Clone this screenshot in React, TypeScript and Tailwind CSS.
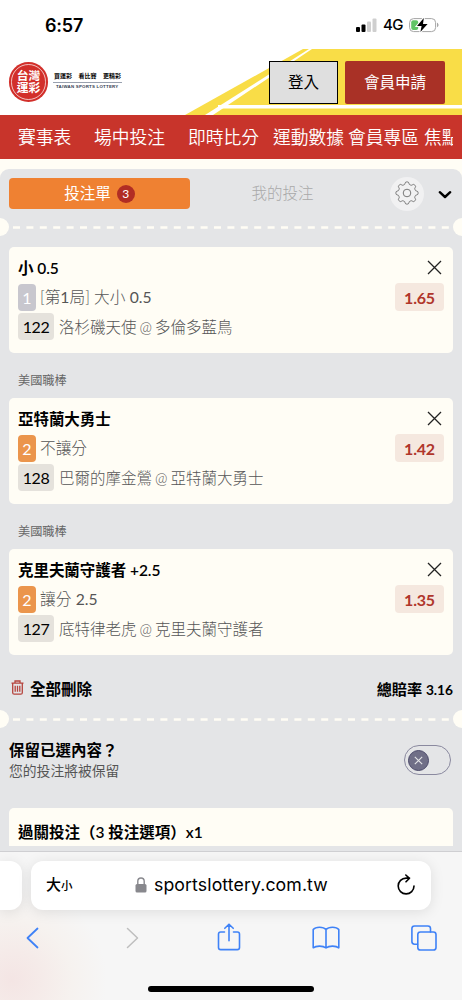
import * as React from "react"

interface Bet {
    id: number
    league?: string
    title: string
    side: number
    market: React.ReactNode
    code: string
    away: string
    home: string
    odds: string
}

const bets: Bet[] = [
    {
        id: 1,
        title: "小 0.5",
        side: 1,
        market: (
            <>
                [第<span className="font-normal">1</span>局] 大小 <span className="font-normal">0.5</span>
            </>
        ),
        code: "122",
        away: "洛杉磯天使",
        home: "多倫多藍鳥",
        odds: "1.65",
    },
    { id: 2, league: "美國職棒", title: "亞特蘭大勇士", side: 2, market: "不讓分", code: "128", away: "巴爾的摩金鶯", home: "亞特蘭大勇士", odds: "1.42" },
    {
        id: 3,
        league: "美國職棒",
        title: "克里夫蘭守護者 +2.5",
        side: 2,
        market: (
            <>
                讓分 <span className="font-normal">2.5</span>
            </>
        ),
        code: "127",
        away: "底特律老虎",
        home: "克里夫蘭守護者",
        odds: "1.35",
    },
]

// Eight rounded teeth around a circle, first one pointing up
const gearPath =
    Array.from({ length: 96 }, (_, i) => {
        const angle = (i / 96) * Math.PI * 2
        const r = 9.9 + 1.2 * Math.tanh(2.2 * Math.cos(angle * 8))
        const x = 12 + r * Math.sin(angle)
        const y = 12 - r * Math.cos(angle)
        return `${i === 0 ? "M" : "L"}${x.toFixed(2)} ${y.toFixed(2)}`
    }).join("") + "z"

function StatusBar() {
    return (
        <div className="flex h-[49px] items-start justify-between bg-white pl-[45px] pr-[23px] pt-[13px]">
            <span className="font-['Inter',sans-serif] text-[18px] font-semibold leading-[26px] tracking-[-0.2px]">6:57</span>
            <div className="flex h-6 items-center">
                <svg width="21" height="14" viewBox="0 0 21 14">
                    <rect x="0" y="9" width="4" height="5" rx="1" />
                    <rect x="5.5" y="6.5" width="4" height="7.5" rx="1" />
                    <rect x="11" y="3.5" width="4" height="10.5" rx="1" fill="#cfcfcf" />
                    <rect x="16.5" y="0.5" width="4" height="13.5" rx="1" fill="#cfcfcf" />
                </svg>
                <span className="ml-[6px] w-[21px] font-['Inter',sans-serif] text-[15px] font-medium leading-[26px] tracking-[-0.5px]">4G</span>
                <svg className="ml-[5px]" width="30" height="16" viewBox="0 0 30 16">
                    <rect x="0.6" y="1.6" width="26" height="13" rx="4" fill="white" stroke="#a5a5a5" />
                    <path d="M28 5.8v4.4c1-.4 1.5-1.2 1.5-2.2S29 6.2 28 5.8z" fill="#a5a5a5" />
                    <rect x="2.2" y="3.2" width="7" height="9.8" rx="2" fill="#61c466" />
                    <path d="M14.8 1 8 9h4.6l-1.2 6L18.6 7H14z" stroke="white" strokeWidth="2" />
                    <path d="M14.8 1 8 9h4.6l-1.2 6L18.6 7H14z" />
                </svg>
            </div>
        </div>
    )
}

function Logo() {
    return (
        <div className="flex items-center">
            <div className="relative flex h-[40px] w-[39px] items-center justify-center rounded-full bg-[#d22f2a]">
                <span className="absolute inset-[2px] rounded-full border border-white/70" />
                <div className="text-center text-[11.8px] font-bold leading-[11.6px] text-white">
                    台灣
                    <br />
                    運彩
                </div>
            </div>
            <div className="-mt-[2px] ml-[5px] w-[69px] text-black">
                <div className="flex h-[10px] justify-between px-[1px] text-[6px] font-bold leading-[8px]">
                    <span>買運彩</span>
                    <span>看比賽</span>
                    <span>更精彩</span>
                </div>
                <div className="border-t border-gray-400 pl-[3px] font-['Liberation_Sans',sans-serif] text-[4.4px] font-bold leading-[8px] tracking-[0.22px] whitespace-nowrap text-gray-700">
                    TAIWAN SPORTS LOTTERY
                </div>
            </div>
        </div>
    )
}

function Header() {
    return (
        <header className="relative h-[66px] bg-white">
            <svg className="absolute inset-0" width="462" height="66" viewBox="0 0 462 66">
                <path d="M185 66 303 0H462V66z" fill="#f9dd47" />
                <path d="M205 66 309 0h3L213 66z" fill="white" />
                <path d="M218 59.5V56H462V59.5z" fill="white" />
            </svg>
            <div className="relative flex h-full items-center justify-between pl-[9px] pr-[17px]">
                <Logo />
                <div className="flex gap-[7px]">
                    <button className="h-[43px] w-[69px] border border-black bg-[#dfdfdf] pt-[2px] text-[15.5px] text-black">登入</button>
                    <button className="h-[43px] w-[100px] rounded-[2px] bg-[#a93126] pt-[2px] text-[15.5px] text-white">會員申請</button>
                </div>
            </div>
        </header>
    )
}

function NavBar() {
    return (
        <nav className="flex h-[44px] overflow-hidden bg-[#c8342b] pl-[18px] text-[17.8px] font-[350] leading-[45px] whitespace-nowrap text-white">
            <span className="w-[76px] shrink-0">賽事表</span>
            <span className="w-[94px] shrink-0">場中投注</span>
            <span className="w-[85px] shrink-0">即時比分</span>
            <span className="w-[75px] shrink-0">運動數據</span>
            <span className="w-[76px] shrink-0">會員專區</span>
            <span className="w-[29px] shrink-0 overflow-hidden">焦點</span>
        </nav>
    )
}

function Perforation() {
    return (
        <div className="flex h-[18px] items-center justify-between">
            <span className="h-[18px] w-[9px] rounded-r-full bg-[#fffdf5]" />
            <svg width="437" height="3" className="mt-[1px]">
                <line x1="0" y1="1.5" x2="437" y2="1.5" stroke="#fffdf5" strokeWidth="2.5" strokeDasharray="7 6.4" />
            </svg>
            <span className="h-[18px] w-[9px] rounded-l-full bg-[#fffdf5]" />
        </div>
    )
}

function SlipTabs() {
    return (
        <div className="flex h-[49px] pl-[9px] pt-[9px]">
            <div className="flex h-[31px] w-[181px] items-center justify-center gap-[6px] rounded-[4px] bg-[#ef8132] text-[15.5px] text-white">
                投注單
                <span className="flex h-[18px] w-[18px] items-center justify-center rounded-full bg-[#b12d24] text-[12px]">3</span>
            </div>
            <div className="h-[31px] w-[185px] text-center text-[15.5px] font-light leading-[31px] text-[#a9a9a9]">我的投注</div>
            <div className="-mt-[1px] ml-[15px] flex h-[34px] w-[34px] items-center justify-center rounded-full bg-[#f1f1f2]">
                <svg className="-mt-[3px]" width="24" height="24" viewBox="0 0 24 24" fill="none" stroke="#777" strokeWidth="1">
                    <circle cx="12" cy="12" r="3.8" />
                    <path d={gearPath} strokeLinejoin="round" />
                </svg>
            </div>
            <svg className="ml-[14px] mt-[12px]" width="14" height="10" viewBox="0 0 14 10" fill="none" stroke="black" strokeWidth="2.4" strokeLinecap="round" strokeLinejoin="round">
                <path d="M1.8 2.2 7 7l5.2-4.8" />
            </svg>
        </div>
    )
}

function BetCard({ bet }: { bet: Bet }) {
    return (
        <>
            {bet.league && <div className="h-[45px] pl-[9px] text-[12.2px] leading-[55px] text-[#666]">{bet.league}</div>}
            <div className="h-[106px] rounded-[5px] bg-[#fffdf5] px-[9px] pt-[8px]">
                <div className="flex h-[28px] justify-between">
                    <h3 className="text-[15.5px] font-semibold leading-[26px] tracking-[-0.05px]">{bet.title}</h3>
                    <svg className="mr-[2px] mt-[5px]" width="15" height="15" viewBox="0 0 15 15" stroke="#222" strokeWidth="1.3">
                        <path d="M1 1l13 13M14 1 1 14" />
                    </svg>
                </div>
                <div className="flex h-[30px] items-start justify-between">
                    <div className="flex h-[29px] items-center">
                        <span className={`h-[27px] w-[18px] rounded-[4px] text-center text-[16px] leading-[28px] text-white ${bet.side === 1 ? "bg-[#c8c7ce]" : "bg-[#eb954c]"}`}>{bet.side}</span>
                        <span className="ml-[4px] text-[15.7px] font-light leading-[27px] text-[#555]">{bet.market}</span>
                    </div>
                    <span className="h-[28px] w-[49px] rounded-[4px] bg-[#f5e8df] text-center text-[16px] font-bold leading-[29px] tracking-[-0.2px] text-[#b0362b]">{bet.odds}</span>
                </div>
                <div className="flex h-[27px] items-center">
                    <span className="h-[27px] w-[36px] rounded-[4px] bg-[#e5e2dc] text-center text-[16px] leading-[27px] tracking-[-0.5px]">{bet.code}</span>
                    <span className="ml-[5px] flex gap-[3px] text-[15.5px] font-light leading-[26px] whitespace-nowrap text-[#555]">
                        <span>{bet.away}</span>
                        <span className="text-[15px]">@</span>
                        <span>{bet.home}</span>
                    </span>
                </div>
            </div>
        </>
    )
}

function SlipFooter() {
    return (
        <>
            <div className="flex h-[55px] items-start justify-between px-[9px] pt-[21px] font-bold">
                <div className="flex items-center text-[15.5px] leading-[26px]">
                    <svg className="ml-[2px] mr-[6px] -mt-[3px]" width="13" height="15" viewBox="0 0 13 15" fill="none" stroke="#b5433d" strokeWidth="1.3">
                        <path d="M.5 3.2h12M4 3V1h5v2M1.7 3.5v9.2q0 1.5 1.5 1.5h6.6q1.500 0 1.500-1.500V3.500M4.200 5.800v6M6.500 5.800v6M8.800 5.800v6" />
                    </svg>
                    全部刪除
                </div>
                <div className="text-[15.200px] leading-[26px]">
                    總賠率 <span className="text-[13.700px]">3.16</span>
                </div>
            </div>
            <Perforation />
            <div className="flex h-[80px] justify-between pl-[9px] pr-[11px] pt-[11px]">
                <div>
                    <div className="text-[15.5px] font-bold leading-[22px]">保留已選內容？</div>
                    <div className="text-[13.8px] leading-[20px] text-[#555]">您的投注將被保留</div>
                </div>
                <div className="mt-[6px] flex h-[30px] w-[47px] items-center rounded-full border border-[#8a899f] pl-[3px]">
                    <span className="flex h-[21px] w-[21px] items-center justify-center rounded-full border border-[#4d4b6b] bg-[#706f87]">
                        <svg width="9" height="9" viewBox="0 0 9 9" stroke="#e4e5e7" strokeWidth="1.1">
                            <path d="M.8.8l7.4 7.4M8.2.8.8 8.2" />
                        </svg>
                    </span>
                </div>
            </div>
            <div className="mx-[9px] h-[38px] rounded-t-[5px] bg-[#fffdf5] pl-[9px] pt-[11px] text-[15.5px] font-semibold leading-[26px]">
                過關投注（3 投注選項）x1
            </div>
        </>
    )
}

function SafariBar() {
    return (
        <footer className="h-[149px] overflow-hidden border-t border-[#cfcfd2] bg-[#f6f6f6] bg-[radial-gradient(circle_at_12px_128px,#f4e5e4_0px,#f5ebe9_30px,#f6f2ef_60px,transparent_95px)]">
            <div className="flex pt-[9px] font-['Inter','Noto_Sans_CJK_TC',sans-serif]">
                <div className="h-[49px] w-[22px] rounded-r-[12px] bg-white shadow-[0_2px_14px_rgba(0,0,0,0.1)]" />
                <div className="ml-[9px] flex h-[49px] w-[400px] items-center rounded-[12px] bg-white pl-[15px] pr-[15px] shadow-[0_2px_14px_rgba(0,0,0,0.1)]">
                    <span className="w-[89px] text-[15px] font-medium">
                        大<span className="text-[11.5px]">小</span>
                    </span>
                    <svg width="12" height="16" viewBox="0 0 12 16" className="-mt-[2px] shrink-0">
                        <rect x="0.5" y="7" width="11" height="8.5" rx="1.5" fill="#88888d" />
                        <path d="M2.8 8V4.3c0-4.4 6.4-4.4 6.4 0V8" fill="none" stroke="#88888d" strokeWidth="1.4" />
                    </svg>
                    <span className="ml-[7px] w-[176px] text-[17.7px] tracking-[0.1px] whitespace-nowrap">sportslottery.com.tw</span>
                    <svg className="ml-auto -mt-[2px]" width="20" height="22" viewBox="0 0 20 22" fill="none" stroke="black" strokeWidth="1.6" strokeLinecap="round" strokeLinejoin="round">
                        <path d="M18 12a7.9 7.9 0 1 1-7.9-7.9h3.4M9.8 1l3.7 3.300-3.500 3.500" />
                    </svg>
                </div>
            </div>
            <div className="flex h-[56px] items-center pl-[26px] text-[#3f82f7]">
                <svg width="13" height="22" viewBox="0 0 13 22" fill="none" stroke="currentColor" strokeWidth="1.8" strokeLinecap="round" strokeLinejoin="round">
                    <path d="M11.5 1.500 1.500 11l10 9.500" />
                </svg>
                <svg className="ml-[87px]" width="13" height="22" viewBox="0 0 13 22" fill="none" stroke="#bebebe" strokeWidth="1.5" strokeLinecap="round" strokeLinejoin="round">
                    <path d="M1.5 1.5 11.5 11l-10 9.5" />
                </svg>
                <svg className="-mt-[3px] ml-[78px]" width="24" height="28" viewBox="0 0 24 28" fill="none" stroke="currentColor" strokeWidth="1.6" strokeLinecap="round" strokeLinejoin="round">
                    <path d="M7.5 9H3.7Q1.5 9 1.5 11.2v13.2q0 2.2 2.2 2.2h16.6q2.2 0 2.2-2.2V11.2Q22.5 9 20.3 9h-3.8M12 17.8V1.300M7.800 5.300 12 1.200l4.200 4.100" />
                </svg>
                <svg className="ml-[71px]" width="28" height="24" viewBox="0 0 28 24" fill="none" stroke="currentColor" strokeWidth="1.6" strokeLinecap="round" strokeLinejoin="round">
                    <path d="M14 3.600Q12 1.300 7.500 1.300T1.200 3.600v18.200q2-1.700 6.300-1.700t6.500 1.900q2.200-1.900 6.500-1.900t6.300 1.700V3.600q-1.800-2.300-6.300-2.300T14 3.600v18.400" />
                </svg>
                <svg className="ml-[71px]" width="26" height="26" viewBox="0 0 26 26" fill="none" stroke="currentColor" strokeWidth="1.6" strokeLinecap="round" strokeLinejoin="round">
                    <rect x="6.8" y="7" width="18.2" height="18" rx="2.6" />
                    <path d="M6.5 19.2h-3Q.9 19.2.9 16.6V3.600Q.9 1 3.500 1h13.400q2.600 0 2.600 2.600V7" />
                </svg>
            </div>
            <div className="ml-[148px] mt-[20px] h-[6px] w-[166px] rounded-full bg-black" />
        </footer>
    )
}

export default function App() {
    return (
        <div className="flex h-[1000px] w-[462px] flex-col overflow-hidden bg-[#fffdf5] font-['Lato','Noto_Sans_CJK_TC',sans-serif] text-black">
            <StatusBar />
            <Header />
            <NavBar />
            <main className="mt-[10px] h-[682px] shrink-0 overflow-hidden rounded-t-[9px] bg-[#e4e5e7]">
                <SlipTabs />
                <Perforation />
                <div className="px-[9px] pt-[11px]">
                    {bets.map((bet) => (
                        <BetCard key={bet.id} bet={bet} />
                    ))}
                </div>
                <SlipFooter />
            </main>
            <SafariBar />
        </div>
    )
}
